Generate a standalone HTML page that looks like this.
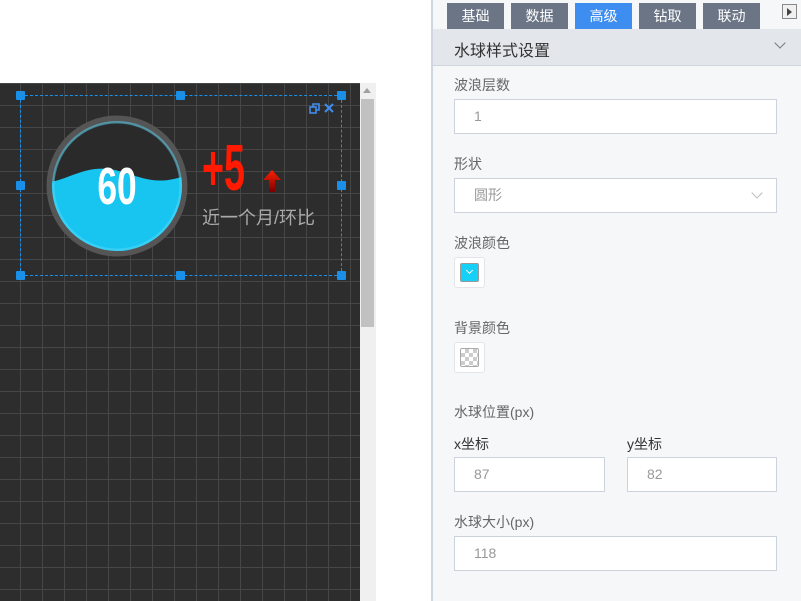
<!DOCTYPE html>
<html><head><meta charset="utf-8"><style>
*{margin:0;padding:0;box-sizing:border-box}
body{width:801px;height:601px;position:relative;background:#fff;font-family:"Liberation Sans","Noto Sans CJK SC",sans-serif;overflow:hidden}
.abs{position:absolute}
#canvas{left:0;top:83px;width:360px;height:518px;background-color:#2d2d2d;
background-image:linear-gradient(#464646 1px,transparent 1px),linear-gradient(90deg,#464646 1px,transparent 1px);
background-size:22px 22px;background-position:0 0,20px 0}
#sb{left:360px;top:83px;width:16px;height:518px;background:#f0f0f0}
#thumb{left:361px;top:99px;width:13px;height:228px;background:#c1c1c1}
#panel{left:431px;top:0;width:370px;height:601px;background:#f6f7f9;border-left:2px solid #d0d6df}
.tab{top:3px;height:26px;width:57px;background:#6b7585;color:#fff;font-size:14px;text-align:center;line-height:26px}
.lbl{left:454px;font-size:14px;color:#666}
.inp{background:#fff;border:1px solid #cdd3dd;height:35px;font-size:14px;color:#999;padding-left:19px;line-height:33px}
.h{width:9px;height:9px;background:#1a8fe8;border-radius:1px}
</style></head><body>
<div id="canvas" class="abs"></div>
<div id="sb" class="abs"></div>
<div class="abs" style="left:363px;top:88px;width:0;height:0;border-left:4px solid transparent;border-right:4px solid transparent;border-bottom:5px solid #a0a0a0"></div>
<div id="thumb" class="abs"></div>

<div class="abs" style="left:20px;top:95px;width:322px;height:181px;border:1px dashed #1a8fe8"></div>
<div class="abs h" style="left:16px;top:91px"></div>
<div class="abs h" style="left:176px;top:91px"></div>
<div class="abs h" style="left:337px;top:91px"></div>
<div class="abs h" style="left:16px;top:181px"></div>
<div class="abs h" style="left:337px;top:181px"></div>
<div class="abs h" style="left:16px;top:271px"></div>
<div class="abs h" style="left:176px;top:271px"></div>
<div class="abs h" style="left:337px;top:271px"></div>
<svg class="abs" style="left:308px;top:102px" width="30" height="14" viewBox="0 0 30 14">
<rect x="2" y="5" width="6" height="6" fill="none" stroke="#3d8ef0" stroke-width="1.6"/>
<path d="M5 5V2h6v6H8" fill="none" stroke="#3d8ef0" stroke-width="1.6"/>
<path d="M17 2l8 8M25 2l-8 8" stroke="#3d8ef0" stroke-width="2"/>
</svg>

<svg class="abs" style="left:45px;top:114px" width="144" height="144" viewBox="0 0 144 144">
<defs><clipPath id="c"><circle cx="72" cy="72" r="65"/></clipPath></defs>
<circle cx="72" cy="72" r="67" fill="#2a2a2a" stroke="#555" stroke-width="7"/>
<g clip-path="url(#c)">
<path d="M0 69 C25 66 40 50 70 56 C95 62 110 74 145 60 L145 150 L0 150Z" fill="#17c5f0"/>
<circle cx="72" cy="72" r="64" fill="none" stroke="#5cdaf7" stroke-width="3" opacity=".5"/>
</g>
<text x="72" y="90" text-anchor="middle" font-family="Liberation Sans" font-weight="bold" font-size="52" fill="#fff" transform="translate(72 0) scale(0.68 1) translate(-72 0)">60</text>
</svg>
<div class="abs" style="left:202px;top:135px;font-size:65px;color:#ff1a00;font-weight:bold;transform:scaleX(0.58);transform-origin:0 0;line-height:65px">+5</div>
<svg class="abs" style="left:262px;top:169px" width="20" height="24" viewBox="0 0 20 24">
<defs><linearGradient id="g" x1="0" y1="0" x2="0" y2="1"><stop offset="0" stop-color="#ff2000"/><stop offset="1" stop-color="#7a0000"/></linearGradient></defs>
<path d="M10 1 L19 11 H13 V23 H7 V11 H1Z" fill="url(#g)"/>
</svg>
<div class="abs" style="left:202px;top:204px;font-size:18px;color:#aaa">近一个月/环比</div>

<div id="panel" class="abs"></div>
<div class="abs tab" style="left:447px">基础</div>
<div class="abs tab" style="left:511px">数据</div>
<div class="abs tab" style="left:575px;background:#3d8ef0">高级</div>
<div class="abs tab" style="left:639px">钻取</div>
<div class="abs tab" style="left:703px">联动</div>
<div class="abs" style="left:782px;top:4px;width:15px;height:15px;border:1px solid #888;background:#f0f0f0"></div>
<div class="abs" style="left:787px;top:8px;width:0;height:0;border-top:4px solid transparent;border-bottom:4px solid transparent;border-left:5px solid #444"></div>
<div class="abs" style="left:433px;top:29px;width:368px;height:37px;background:#e3e7ec;border-bottom:1px solid #cfd5dd"></div>
<div class="abs" style="left:454px;top:37px;font-size:16px;color:#333">水球样式设置</div>
<div class="abs" style="left:776px;top:39px;width:8px;height:8px;border-right:1px solid #777;border-bottom:1px solid #777;transform:rotate(45deg)"></div>

<div class="abs lbl" style="top:75px">波浪层数</div>
<div class="abs inp" style="left:454px;top:99px;width:323px">1</div>
<div class="abs lbl" style="top:154px">形状</div>
<div class="abs inp" style="left:454px;top:178px;width:323px">圆形</div>
<div class="abs" style="left:753px;top:189px;width:8px;height:8px;border-right:1px solid #bbb;border-bottom:1px solid #bbb;transform:rotate(45deg)"></div>
<div class="abs lbl" style="top:233px">波浪颜色</div>
<div class="abs" style="left:454px;top:257px;width:31px;height:31px;border:1px solid #e3e5e8;border-radius:3px;background:#fff"></div>
<div class="abs" style="left:460px;top:263px;width:19px;height:19px;background:#17d0f8;border:1px solid #999;border-radius:2px"></div>
<div class="abs" style="left:467px;top:268px;width:5px;height:5px;border-right:1px solid #fff;border-bottom:1px solid #fff;transform:rotate(45deg)"></div>
<div class="abs lbl" style="top:318px">背景颜色</div>
<div class="abs" style="left:454px;top:342px;width:31px;height:31px;border:1px solid #e3e5e8;border-radius:3px;background:#fff"></div>
<div class="abs" style="left:460px;top:348px;width:19px;height:19px;border:1px solid #aaa;border-radius:2px;background-color:#fff;background-image:linear-gradient(45deg,#ccc 25%,transparent 25%,transparent 75%,#ccc 75%),linear-gradient(45deg,#ccc 25%,transparent 25%,transparent 75%,#ccc 75%);background-size:8px 8px;background-position:0 0,4px 4px"></div>
<div class="abs lbl" style="top:402px">水球位置(px)</div>
<div class="abs lbl" style="top:434px;color:#333">x坐标</div>
<div class="abs lbl" style="left:627px;top:434px;color:#333">y坐标</div>
<div class="abs inp" style="left:454px;top:457px;width:151px">87</div>
<div class="abs inp" style="left:627px;top:457px;width:150px">82</div>
<div class="abs lbl" style="top:512px">水球大小(px)</div>
<div class="abs inp" style="left:454px;top:536px;width:323px">118</div>
</body></html>
